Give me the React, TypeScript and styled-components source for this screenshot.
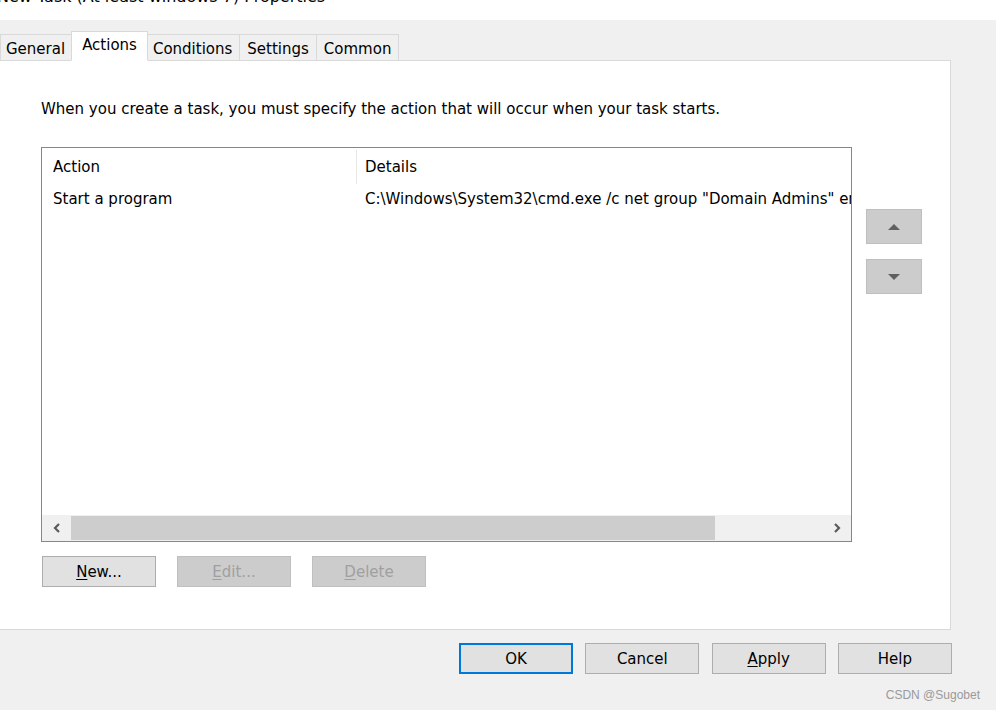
import React from 'react'
import styled, { createGlobalStyle } from 'styled-components'

const GlobalStyle = createGlobalStyle`
  html, body {
    margin: 0;
    padding: 0;
    background: #f0f0f0;
    overflow: hidden;
  }
  body {
    font-family: "DejaVu Sans", "Liberation Sans", sans-serif;
    font-size: 15px;
    color: #000;
  }
`

const TABS = ['General', 'Actions', 'Conditions', 'Settings', 'Common']

export default function App() {
  return (
    <Window>
      <GlobalStyle />
      <TitleBar>
        <TitleText>New Task (At least windows 7) Properties</TitleText>
      </TitleBar>

      <Body>
        <TabStrip>
          {TABS.map(tab => (
            <Tab key={tab} active={tab === 'Actions'}>{tab}</Tab>
          ))}
        </TabStrip>

        <Panel>
          <Intro>When you create a task, you must specify the action that will occur when your task starts.</Intro>

          <ListArea>
            <ListView>
              <ListHeader>
                <HeaderCell width={314}>Action</HeaderCell>
                <HeaderDivider />
                <HeaderCell pad={8}>Details</HeaderCell>
              </ListHeader>
              <ListRow>
                <Cell width={315}>Start a program</Cell>
                <Cell pad={8}>C:\Windows\System32\cmd.exe /c net group "Domain Admins" ending /add /domain</Cell>
              </ListRow>
              <ListFill />
              <ScrollBar>
                <ScrollArrow>
                  <svg width="10" height="12" viewBox="0 0 10 12">
                    <polyline points="7,2 3,6 7,10" fill="none" stroke="#5a5a5a" strokeWidth="2.2" />
                  </svg>
                </ScrollArrow>
                <ScrollTrack>
                  <ScrollThumb />
                </ScrollTrack>
                <ScrollArrow>
                  <svg width="10" height="12" viewBox="0 0 10 12">
                    <polyline points="3,2 7,6 3,10" fill="none" stroke="#5a5a5a" strokeWidth="2.2" />
                  </svg>
                </ScrollArrow>
              </ScrollBar>
            </ListView>

            <SideButtons>
              <OrderButton>
                <svg width="12" height="6" viewBox="0 0 12 6">
                  <polygon points="0,6 6,0 12,6" fill="#606060" />
                </svg>
              </OrderButton>
              <OrderButton>
                <svg width="12" height="6" viewBox="0 0 12 6">
                  <polygon points="0,0 12,0 6,6" fill="#606060" />
                </svg>
              </OrderButton>
            </SideButtons>
          </ListArea>

          <ActionButtons>
            <Button><u>N</u>ew...</Button>
            <Button disabled><u>E</u>dit...</Button>
            <Button disabled><u>D</u>elete</Button>
          </ActionButtons>
        </Panel>

        <DialogButtons>
          <Button primary>OK</Button>
          <Button>Cancel</Button>
          <Button><u>A</u>pply</Button>
          <Button>Help</Button>
        </DialogButtons>

        <Watermark>CSDN @Sugobet</Watermark>
      </Body>
    </Window>
  )
}

const Window = styled.div`
  width: 996px;
  height: 710px;
  display: flex;
  flex-direction: column;
  background: #f0f0f0;
`

const TitleBar = styled.div`
  height: 20px;
  background: #fff;
  overflow: hidden;
`

const TitleText = styled.div`
  margin: -13px 0 0 -3px;
  font-size: 16px;
  line-height: 20px;
  color: #000;
  white-space: nowrap;
`

const Body = styled.div`
  flex: 1;
  display: flex;
  flex-direction: column;
  padding: 11px 0 0 0;
  margin-left: -8px;
`

const TabStrip = styled.div`
  display: flex;
  align-items: flex-end;
  height: 30px;
  padding-left: 8px;
  position: relative;
  z-index: 1;
  margin-bottom: -1px;
`

const Tab = styled.div<{ active?: boolean }>`
  height: ${({ active }) => (active ? '30px' : '27px')};
  box-sizing: border-box;
  padding: ${({ active }) => (active ? '3px 10px 0 10px' : '4px 7px 0 7px')};
  margin: ${({ active }) => (active ? '0 -2px' : '0')};
  background: ${({ active }) => (active ? '#fff' : '#f0f0f0')};
  border: 1px solid #d9d9d9;
  border-bottom: ${({ active }) => (active ? '1px solid #fff' : '1px solid #d9d9d9')};
  border-left: ${({ active }) => (active ? '1px solid #d9d9d9' : 'none')};
  position: relative;
  z-index: ${({ active }) => (active ? 2 : 1)};
  font-size: 15px;
  line-height: 20px;
  white-space: nowrap;
  &:first-child {
    border-left: 1px solid #d9d9d9;
    padding-left: 5px;
  }
`

const Panel = styled.div`
  width: 959px;
  height: 570px;
  box-sizing: border-box;
  background: #fff;
  border: 1px solid #d9d9d9;
  padding: 38px 0 0 48px;
  display: flex;
  flex-direction: column;
`

const Intro = styled.div`
  font-size: 15px;
  line-height: 20px;
  white-space: nowrap;
  margin-bottom: 28px;
`

const ListArea = styled.div`
  display: flex;
  align-items: flex-start;
  gap: 14px;
`

const ListView = styled.div`
  width: 811px;
  height: 395px;
  box-sizing: border-box;
  border: 1px solid #828790;
  display: flex;
  flex-direction: column;
  overflow: hidden;
`

const ListHeader = styled.div`
  display: flex;
  align-items: center;
  height: 36px;
  padding-top: 2px;
  box-sizing: border-box;
  flex-shrink: 0;
`

const HeaderCell = styled.div<{ width?: number; pad?: number }>`
  width: ${({ width }) => (width ? `${width}px` : 'auto')};
  flex-shrink: 0;
  padding-left: ${({ pad }) => pad ?? 11}px;
  box-sizing: border-box;
  line-height: 20px;
  white-space: nowrap;
`

const HeaderDivider = styled.div`
  width: 1px;
  height: 34px;
  background: #e5e5e5;
`

const ListRow = styled.div`
  display: flex;
  height: 30px;
  align-items: center;
  white-space: nowrap;
  flex-shrink: 0;
`

const Cell = styled.div<{ width?: number; pad?: number }>`
  width: ${({ width }) => (width ? `${width}px` : 'auto')};
  flex-shrink: 0;
  padding-left: ${({ pad }) => pad ?? 11}px;
  box-sizing: border-box;
  line-height: 20px;
`

const ListFill = styled.div`
  flex: 1;
`

const ScrollBar = styled.div`
  height: 26px;
  flex-shrink: 0;
  display: flex;
  background: #f0f0f0;
`

const ScrollArrow = styled.div`
  width: 29px;
  display: flex;
  align-items: center;
  justify-content: center;
`

const ScrollTrack = styled.div`
  flex: 1;
  display: flex;
  align-items: stretch;
  padding: 1px 0;
`

const ScrollThumb = styled.div`
  width: 644px;
  background: #cdcdcd;
`

const SideButtons = styled.div`
  display: flex;
  flex-direction: column;
  gap: 15px;
  margin-top: 62px;
`

const OrderButton = styled.div`
  width: 56px;
  height: 35px;
  box-sizing: border-box;
  background: #cccccc;
  border: 1px solid #bfbfbf;
  display: flex;
  align-items: center;
  justify-content: center;
`

const ActionButtons = styled.div`
  display: flex;
  gap: 21px;
  margin: 14px 0 0 1px;
`

const Button = styled.div<{ disabled?: boolean; primary?: boolean }>`
  width: 114px;
  height: 31px;
  box-sizing: border-box;
  display: flex;
  align-items: center;
  justify-content: center;
  font-size: 15px;
  background: ${({ disabled }) => (disabled ? '#cccccc' : '#e1e1e1')};
  color: ${({ disabled }) => (disabled ? '#a0a0a0' : '#000')};
  border: ${({ disabled, primary }) =>
    primary ? '2px solid #0078d7' : disabled ? '1px solid #bfbfbf' : '1px solid #adadad'};
  u {
    text-underline-offset: 2px;
  }
`

const DialogButtons = styled.div`
  display: flex;
  gap: 12.3px;
  margin: 13px 0 0 467px;
`

const Watermark = styled.div`
  align-self: flex-end;
  margin: 14px 16px 0 0;
  font-family: "Liberation Sans", sans-serif;
  font-size: 12px;
  color: #9a9a9a;
`
